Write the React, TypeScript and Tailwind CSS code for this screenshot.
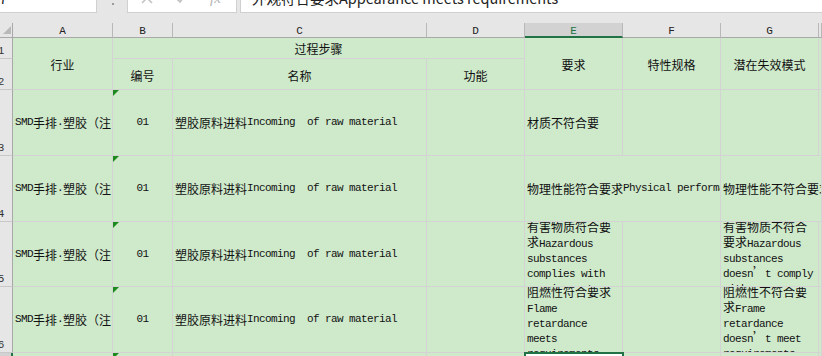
import React from "react";

const CJK = "font-['Noto_Sans_CJK_SC',sans-serif] text-[12px]";
const MONO = "font-['Liberation_Mono',monospace] text-[11px] tracking-[-0.6px]";

function Rich({ text }: { text: string }) {
  const parts = text.split(/([\x20-\x7e]+)/).filter((p) => p.length > 0);
  return (
    <>
      {parts.map((p, i) =>
        /^[\x20-\x7e]+$/.test(p) ? (
          <span key={i} className={MONO}>
            {p}
          </span>
        ) : (
          <span key={i} className={CJK}>
            {p}
          </span>
        )
      )}
    </>
  );
}

function Cell({
  children,
  className = "",
}: {
  children?: React.ReactNode;
  className?: string;
}) {
  return (
    <div
      className={`relative overflow-hidden border-r border-b border-[#d3d3d3] bg-[#cfe9cb] text-[#111] ${className}`}
    >
      {children}
    </div>
  );
}

function Tri() {
  return (
    <span className="absolute left-0 top-0 h-0 w-0 border-t-[6px] border-r-[6px] border-t-[#1d8a1d] border-r-transparent" />
  );
}

function RowHead({ n, selected = false }: { n: string; selected?: boolean }) {
  return (
    <div
      className={`flex items-end overflow-hidden border-b border-b-[#c8c8c8] pb-[1px] ${
        selected
          ? "border-r-2 border-r-[#217346] bg-[#d2d2d2]"
          : "border-r border-r-[#a8a8a8] bg-[#e6e6e6]"
      }`}
    >
      <span className="-ml-[12px] block w-[26px] shrink-0 text-center font-['Liberation_Mono',monospace] text-[11px] leading-[11px] text-[#333]">
        {n}
      </span>
    </div>
  );
}

function ColHead({ l, selected = false }: { l: string; selected?: boolean }) {
  return (
    <div
      className={`flex items-center justify-center pt-[3px] font-['Liberation_Mono',monospace] text-[11px] leading-[11px] ${
        selected
          ? "border-b-2 border-r border-b-[#217346] border-r-[#b8b8b8] bg-[#d2d2d2] text-[#217346]"
          : "border-b border-r border-b-[#a8a8a8] border-r-[#b8b8b8] bg-[#e6e6e6] text-[#222]"
      }`}
    >
      {l}
    </div>
  );
}

function Line1({ text, center = false }: { text: string; center?: boolean }) {
  return (
    <div
      className={`flex h-full items-center whitespace-pre px-[2px] leading-[15px] ${
        center ? "justify-center" : ""
      }`}
    >
      <Rich text={text} />
    </div>
  );
}

function Wrapped({ lines }: { lines: string[] }) {
  return (
    <div className="-mt-[4px] pl-[2px] leading-[15px]">
      {lines.map((l, i) => (
        <div key={i} className="h-[15px] whitespace-pre">
          <Rich text={l} />
        </div>
      ))}
    </div>
  );
}

const A_TEXT = "SMD手排.塑胶（注:塑胶件）";
const C_TEXT = "塑胶原料进料Incoming  of raw material";

export default function App() {
  return (
    <div className="h-[356px] w-[822px] overflow-hidden bg-[#e6e6e6] font-['Noto_Sans_CJK_SC',sans-serif]">
      {/* formula bar */}
      <div className="flex h-[23px] items-start bg-[#e6e6e6]">
        <div className="h-[13px] w-[97px] shrink-0 overflow-hidden border-r border-b border-[#d0d0d0] bg-white">
          <div className="-ml-[9px] -mt-[12px] whitespace-nowrap text-[14px] leading-[20px] text-[#222]">
            E7
          </div>
        </div>
        <div className="relative h-[13px] w-[30px] shrink-0">
          <span className="absolute left-[15px] top-[3px] h-[2px] w-[2px] bg-[#9a9a9a]" />
        </div>
        <div className="relative h-[13px] w-[110px] shrink-0 overflow-hidden border-x border-b border-[#d0d0d0] bg-white">
          <svg
            className="absolute left-[13px] top-[-8px]"
            width="12"
            height="12"
            viewBox="0 0 12 12"
          >
            <path d="M1 1 L11 11 M11 1 L1 11" stroke="#c4c4c4" strokeWidth="1.6" />
          </svg>
          <svg
            className="absolute left-[47px] top-[-8px]"
            width="12"
            height="12"
            viewBox="0 0 12 12"
          >
            <path d="M1 6 L5 10 L11 2" stroke="#c4c4c4" strokeWidth="1.8" fill="none" />
          </svg>
          <span className="absolute left-[82px] top-[-11px] font-['Liberation_Serif',serif] text-[15px] italic leading-[18px] text-[#b4b4b4]">
            fx
          </span>
        </div>
        <div className="w-[3px] shrink-0" />
        <div className="h-[13px] flex-1 overflow-hidden border-l border-b border-[#d0d0d0] bg-white">
          <div className="-mt-[12px] whitespace-nowrap pl-[11px] text-[14.5px] leading-[20px] text-[#222]">
            外观符合要求Appearance meets requirements
          </div>
        </div>
      </div>

      {/* sheet grid */}
      <div className="grid grid-cols-[13px_100px_60px_254px_98px_98px_98px_98px_1fr] grid-rows-[15px_21px_31px_66px_66px_65px_66px_20px]">
        {/* column headers */}
        <div className="relative border-r border-b border-r-[#a8a8a8] border-b-[#a8a8a8] bg-[#e6e6e6]">
          <svg className="absolute left-[3px] top-[3px]" width="9" height="9" viewBox="0 0 9 9">
            <polygon points="8,0 8,8 0,8" fill="#b9b9b9" />
          </svg>
        </div>
        <ColHead l="A" />
        <ColHead l="B" />
        <ColHead l="C" />
        <ColHead l="D" />
        <ColHead l="E" selected />
        <ColHead l="F" />
        <ColHead l="G" />
        <ColHead l="" />

        {/* row 1 */}
        <RowHead n="1" />
        <Cell className="row-span-2">
          <div className="flex h-full items-center justify-center pt-[2px]">
            <Rich text="行业" />
          </div>
        </Cell>
        <Cell className="col-span-3">
          <div className="flex h-full items-center justify-center pt-[2px]">
            <Rich text="过程步骤" />
          </div>
        </Cell>
        <Cell className="row-span-2">
          <div className="flex h-full items-center justify-center pt-[2px]">
            <Rich text="要求" />
          </div>
        </Cell>
        <Cell className="row-span-2">
          <div className="flex h-full items-center justify-center pt-[2px]">
            <Rich text="特性规格" />
          </div>
        </Cell>
        <Cell className="row-span-2">
          <div className="flex h-full items-center justify-center pt-[2px]">
            <Rich text="潜在失效模式" />
          </div>
        </Cell>
        <Cell className="row-span-2" />

        {/* row 2 */}
        <RowHead n="2" />
        <Cell>
          <div className="flex h-full items-center justify-center pt-[3px]">
            <Rich text="编号" />
          </div>
        </Cell>
        <Cell>
          <div className="flex h-full items-center justify-center pt-[3px]">
            <Rich text="名称" />
          </div>
        </Cell>
        <Cell>
          <div className="flex h-full items-center justify-center pt-[3px]">
            <Rich text="功能" />
          </div>
        </Cell>

        {/* row 3 */}
        <RowHead n="3" />
        <Cell>
          <Line1 text={A_TEXT} />
        </Cell>
        <Cell>
          <Tri />
          <Line1 text="01" center />
        </Cell>
        <Cell>
          <Line1 text={C_TEXT} />
        </Cell>
        <Cell />
        <Cell>
          <Line1 text="材质不符合要" />
        </Cell>
        <Cell />
        <Cell />
        <Cell />

        {/* row 4 */}
        <RowHead n="4" />
        <Cell>
          <Line1 text={A_TEXT} />
        </Cell>
        <Cell>
          <Tri />
          <Line1 text="01" center />
        </Cell>
        <Cell>
          <Line1 text={C_TEXT} />
        </Cell>
        <Cell />
        <Cell className="col-span-2">
          <div className="w-[195px] overflow-hidden h-full">
            <Line1 text="物理性能符合要求Physical performance meets requirements" />
          </div>
        </Cell>
        <Cell className="col-span-2">
          <Line1 text="物理性能不符合要求Physical performance doesn’t meet requirements" />
        </Cell>

        {/* row 5 */}
        <RowHead n="5" />
        <Cell>
          <Line1 text={A_TEXT} />
        </Cell>
        <Cell>
          <Tri />
          <Line1 text="01" center />
        </Cell>
        <Cell>
          <Line1 text={C_TEXT} />
        </Cell>
        <Cell />
        <Cell>
          <Wrapped
            lines={["有害物质符合要", "求Hazardous", "substances", "complies with", "requirements"]}
          />
        </Cell>
        <Cell />
        <Cell>
          <Wrapped
            lines={["有害物质不符合", "要求Hazardous", "substances", "doesn’t comply", "with", "requirements"]}
          />
        </Cell>
        <Cell />

        {/* row 6 */}
        <RowHead n="6" />
        <Cell>
          <Line1 text={A_TEXT} />
        </Cell>
        <Cell>
          <Tri />
          <Line1 text="01" center />
        </Cell>
        <Cell>
          <Line1 text={C_TEXT} />
        </Cell>
        <Cell />
        <Cell>
          <Wrapped lines={["阻燃性符合要求", "Flame", "retardance", "meets", "requirements"]} />
        </Cell>
        <Cell />
        <Cell>
          <Wrapped lines={["阻燃性不符合要", "求Frame", "retardance", "doesn’t meet", "requirements"]} />
        </Cell>
        <Cell />

        {/* row 7 */}
        <RowHead n="7" selected />
        <Cell />
        <Cell>
          <Tri />
        </Cell>
        <Cell />
        <Cell />
        <div className="relative z-10 bg-white">
          <div className="absolute -left-[1px] -top-[1px] -right-[1px] bottom-0 border-2 border-[#217346]" />
        </div>
        <Cell />
        <Cell />
        <Cell />
      </div>
    </div>
  );
}
